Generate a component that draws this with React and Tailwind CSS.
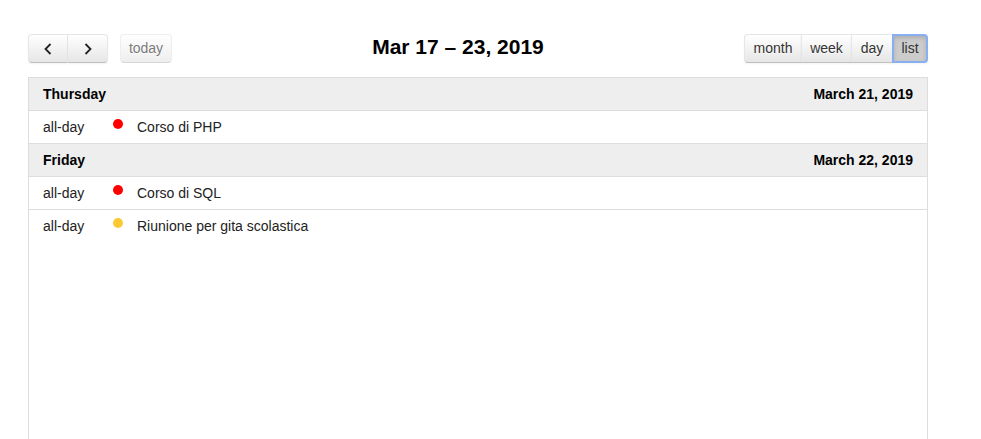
import React from 'react';

const btnBase =
  'h-[29px] flex items-center justify-center text-[14px] text-[#333] border border-[#e6e6e6] border-b-[#bfbfbf] bg-linear-to-b from-white to-[#e6e6e6] shadow-[inset_0_1px_0_rgba(255,255,255,0.2),0_1px_2px_rgba(0,0,0,0.05)] [text-shadow:0_1px_1px_rgba(255,255,255,0.75)]';

const Chevron = ({ dir }) => (
  <svg width="8" height="12" viewBox="0 0 8 12" fill="none">
    {dir === 'left' ? (
      <polyline points="6.5,1 1.5,6 6.5,11" stroke="#222" strokeWidth="1.8" />
    ) : (
      <polyline points="1.5,1 6.5,6 1.5,11" stroke="#222" strokeWidth="1.8" />
    )}
  </svg>
);

const days = [
  {
    name: 'Thursday',
    date: 'March 21, 2019',
    events: [{ title: 'Corso di PHP', color: 'bg-[#ff0000]' }],
  },
  {
    name: 'Friday',
    date: 'March 22, 2019',
    events: [
      { title: 'Corso di SQL', color: 'bg-[#ff0000]' },
      { title: 'Riunione per gita scolastica', color: 'bg-[#fcc934]' },
    ],
  },
];

const App = () => {
  return (
    <div className="min-h-screen bg-white font-['Liberation_Sans',Arial,sans-serif]">
      <div className="w-[900px] ml-[28px] pt-[34px]">
        {/* Toolbar */}
        <div className="flex items-center mb-[14px]">
          <div className="flex items-center">
            <button className={`${btnBase} w-[40px] rounded-l-[4px]`}>
              <Chevron dir="left" />
            </button>
            <button className={`${btnBase} w-[40px] border-l-0 rounded-r-[4px]`}>
              <Chevron dir="right" />
            </button>
            <button className={`${btnBase} w-[52px] ml-[12px] rounded-[4px] opacity-65 shadow-none`}>
              today
            </button>
          </div>
          <div className="flex-1 text-center">
            <h2 className="text-[21px] font-bold text-black leading-none relative -top-[2px]">
              Mar 17 – 23, 2019
            </h2>
          </div>
          <div className="flex items-center">
            <button className={`${btnBase} w-[58px] rounded-l-[4px]`}>month</button>
            <button className={`${btnBase} w-[51px] -ml-px`}>week</button>
            <button className={`${btnBase} w-[42px] -ml-px`}>day</button>
            <button className="h-[29px] w-[36px] -ml-px flex items-center justify-center text-[14px] text-[#333] bg-[#cccccc] border-2 border-[#88aff2] rounded-r-[4px] shadow-[inset_0_2px_4px_rgba(0,0,0,0.15),0_1px_2px_rgba(0,0,0,0.05)]">
              list
            </button>
          </div>
        </div>

        {/* List view */}
        <div className="border-x border-t border-[#ddd] min-h-[380px] text-[14px]">
          {days.map((day, i) => (
            <div key={day.name}>
              <div
                className={`${i > 0 ? 'h-[33px] border-t border-[#ddd]' : 'h-[32px]'} bg-[#eeeeee] flex items-center justify-between px-[14px] font-bold text-black`}
              >
                <span>{day.name}</span>
                <span>{day.date}</span>
              </div>
              {day.events.map((ev) => (
                <div key={ev.title} className="h-[33px] border-t border-[#ddd] flex items-center text-[#222]">
                  <div className="pl-[14px] w-[70px]">all-day</div>
                  <div className="w-[38px] flex justify-center">
                    <span className={`block w-[10px] h-[10px] rounded-full ${ev.color} relative -top-[3px]`} />
                  </div>
                  <div>{ev.title}</div>
                </div>
              ))}
            </div>
          ))}
        </div>
      </div>
    </div>
  );
};

export default App;
